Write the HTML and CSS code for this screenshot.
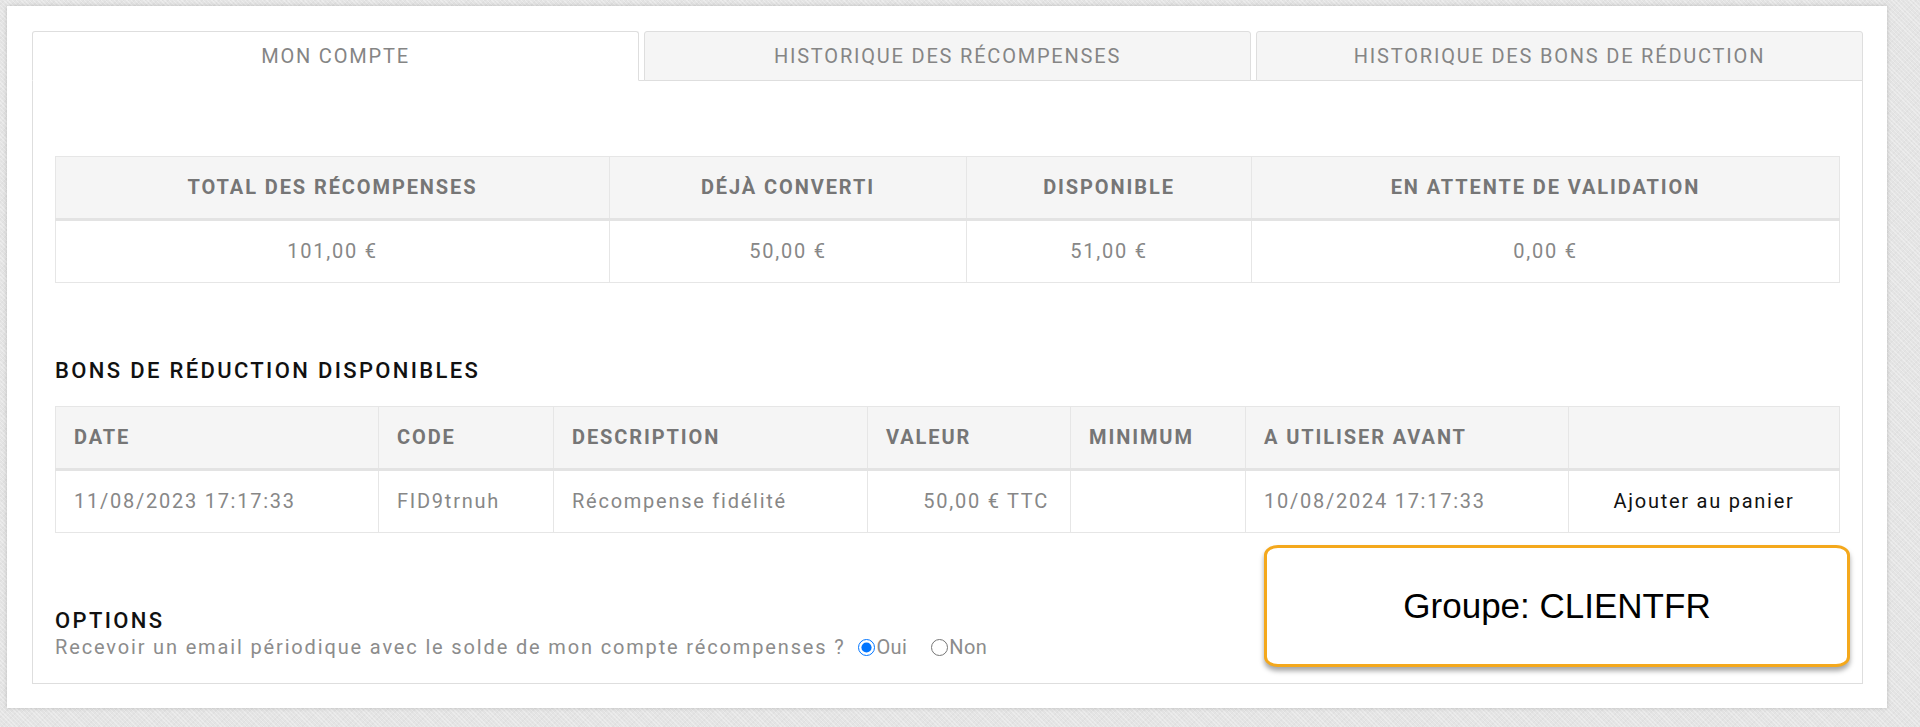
FILE: index.html
```
<!DOCTYPE html>
<html lang="fr">
<head>
  <meta charset="UTF-8">
  <meta name="viewport" content="width=device-width, initial-scale=1.0">
  <title>Mon compte récompenses</title>
  <link rel="stylesheet" href="styles.css">
</head>
<body>

<div class="card">
  <ul class="tabs">
    <li class="tab active">MON COMPTE</li>
    <li class="tab">HISTORIQUE DES RÉCOMPENSES</li>
    <li class="tab">HISTORIQUE DES BONS DE RÉDUCTION</li>
  </ul>

  <div class="panel">
    <table class="summary">
      <colgroup>
        <col style="width:554px">
        <col style="width:357px">
        <col style="width:285px">
        <col>
      </colgroup>
      <thead>
        <tr>
          <th>TOTAL DES RÉCOMPENSES</th>
          <th>DÉJÀ CONVERTI</th>
          <th>DISPONIBLE</th>
          <th>EN ATTENTE DE VALIDATION</th>
        </tr>
      </thead>
      <tbody>
        <tr>
          <td>101,00 €</td>
          <td>50,00 €</td>
          <td>51,00 €</td>
          <td>0,00 €</td>
        </tr>
      </tbody>
    </table>

    <h3>BONS DE RÉDUCTION DISPONIBLES</h3>
    <table class="vouchers">
      <colgroup>
        <col style="width:323px">
        <col style="width:175px">
        <col style="width:314px">
        <col style="width:203px">
        <col style="width:175px">
        <col style="width:323px">
        <col>
      </colgroup>
      <thead>
        <tr>
          <th>DATE</th>
          <th>CODE</th>
          <th>DESCRIPTION</th>
          <th>VALEUR</th>
          <th>MINIMUM</th>
          <th>A UTILISER AVANT</th>
          <th></th>
        </tr>
      </thead>
      <tbody>
        <tr>
          <td>11/08/2023 17:17:33</td>
          <td>FID9trnuh</td>
          <td>Récompense fidélité</td>
          <td class="price">50,00 € TTC</td>
          <td></td>
          <td>10/08/2024 17:17:33</td>
          <td class="add"><a href="#">Ajouter au panier</a></td>
        </tr>
      </tbody>
    </table>

    <h3 class="options-title">OPTIONS</h3>
    <p class="options">
      Recevoir un email périodique avec le solde de mon compte récompenses ?
      <label><input type="radio" name="reminder" checked>Oui</label><label class="second"><input type="radio" name="reminder">Non</label>
    </p>
  </div>

  <div class="group-note">Groupe: CLIENTFR</div>
</div>

</body>
</html>
```

FILE: styles.css
```
body {
  margin: 0;
  padding: 6px 0 0 7px;
  font-family: Roboto, "Noto Sans", sans-serif;
  background-color: #e4e4e4;
  background-image:
    repeating-linear-gradient(45deg, rgba(255, 255, 255, 0.3) 0 1px, transparent 1px 3px),
    repeating-linear-gradient(-45deg, rgba(0, 0, 0, 0.025) 0 1px, transparent 1px 4px);
  height: 727px;
  box-sizing: border-box;
  overflow: hidden;
}
.card {
  position: relative;
  width: 1880px;
  box-sizing: border-box;
  padding: 25px 24px 24px 25px;
  background-color: #fff;
  box-shadow: 0 0 4px rgba(0, 0, 0, 0.18);
}
.tabs {
  display: flex;
  gap: 5px;
  list-style: none;
  margin: 0 0 -1px 0;
  padding: 0;
  position: relative;
}
.tab {
  flex: 1;
  padding: 10px;
  line-height: 28px;
  font-size: 20px;
  letter-spacing: 1.8px;
  text-align: center;
  color: #858585;
  background-color: #f5f5f5;
  border: 1px solid #dedede;
  border-radius: 3px 3px 0 0;
}
.tab.active {
  background-color: #fff;
  border-bottom-color: #fff;
}
.panel {
  border: 1px solid #dedede;
  padding: 75px 22px 24px 22px;
}
table {
  width: 100%;
  border-collapse: collapse;
  table-layout: fixed;
  font-size: 20px;
  letter-spacing: 1.75px;
}
th, td {
  border: 1px solid #e6e6e6;
  padding: 16px 18px;
  line-height: 29px;
  white-space: nowrap;
}
th {
  background-color: #f5f5f5;
  color: #767676;
  font-weight: 700;
  letter-spacing: 1.9px;
  border-bottom: 3px solid #e3e3e3;
}
td {
  color: #878787;
}
.summary th, .summary td {
  text-align: center;
}
.vouchers th, .vouchers td {
  text-align: left;
}
.vouchers td.price {
  text-align: right;
  padding-right: 21px;
}
.vouchers td.add {
  text-align: center;
}
.add a {
  color: #111;
  text-decoration: none;
}
h3 {
  margin: 73px 0 20px 0;
  font-size: 22px;
  font-weight: 500;
  letter-spacing: 2.35px;
  line-height: 30px;
  color: #111;
}
h3.options-title {
  margin: 74px 0 0 0;
  line-height: 28px;
}
.options {
  margin: 0;
  font-size: 20px;
  letter-spacing: 1.85px;
  line-height: 24px;
  color: #8c8c8c;
}
.options label {
  letter-spacing: 0.4px;
}
.options input {
  width: 17px;
  height: 17px;
  margin: 0 1px 0 6px;
  vertical-align: -2px;
}
.options label.second {
  margin-left: 18px;
}
.group-note {
  position: absolute;
  left: 1257px;
  top: 539px;
  width: 586px;
  height: 122px;
  box-sizing: border-box;
  border: 3px solid #f4a81c;
  border-radius: 14px / 10px;
  background-color: #fff;
  box-shadow: 0 4px 5px rgba(0, 0, 0, 0.35);
  display: flex;
  align-items: center;
  justify-content: center;
  font-family: "Liberation Sans", Arial, sans-serif;
  font-size: 35px;
  color: #000;
}
```
